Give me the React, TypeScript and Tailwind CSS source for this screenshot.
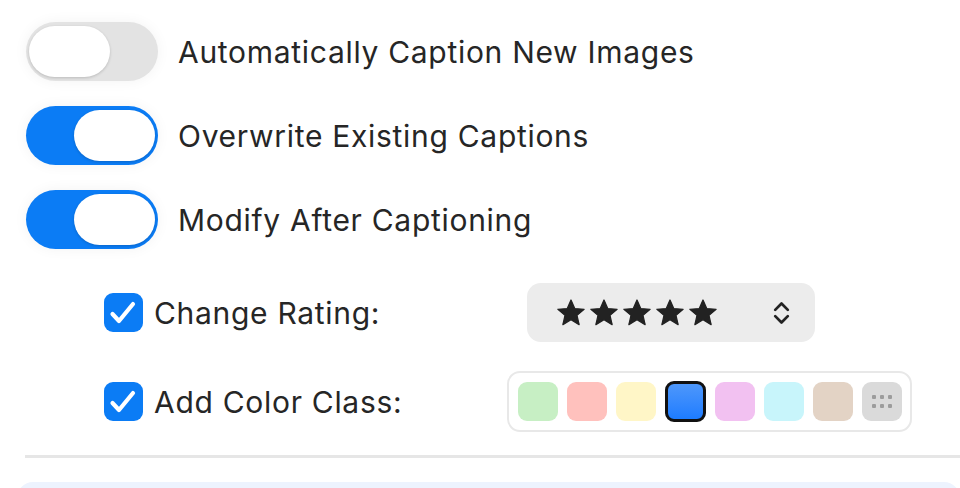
import React from "react";

const font = { fontFamily: 'Inter, "Noto Sans", "Liberation Sans", sans-serif' };

function Toggle({ on }: { on: boolean }) {
  return (
    <div
      className={`relative h-[59px] w-[132px] shrink-0 rounded-full shadow-[0_0_14px_rgba(0,0,0,0.05)] ${
        on ? "bg-[#0b7cf5]" : "bg-[#e3e3e3]"
      }`}
    >
      <div
        className={`absolute top-[4px] h-[51px] w-[81px] rounded-full bg-white shadow-[0_1px_3px_rgba(0,0,0,0.18)] ${
          on ? "right-[3px]" : "left-[3px]"
        }`}
      />
    </div>
  );
}

function Check() {
  return (
    <div className="flex h-[39px] w-[39px] shrink-0 items-center justify-center rounded-[9px] bg-[#0b7cf5]">
      <svg width="39" height="39" viewBox="0 0 39 39" fill="none">
        <path d="M8.5 21l6.5 7L29 11" stroke="white" strokeWidth="4.2" strokeLinecap="round" strokeLinejoin="round" />
      </svg>
    </div>
  );
}

function Star() {
  return (
    <svg width="30" height="29" viewBox="0 0 24 23" className="shrink-0">
      <polygon
        points="12,1.5 15,8.3 22.5,8.9 16.8,13.8 18.5,21.2 12,17.3 5.5,21.2 7.2,13.8 1.5,8.9 9,8.3"
        fill="#222"
        stroke="#222"
        strokeWidth="1"
        strokeLinejoin="round"
      />
    </svg>
  );
}

const swatches = ["#c7efc4", "#ffc1bd", "#fff6c7", "blue", "#f2c1f1", "#c8f5fb", "#e3d3c5", "more"];

const label = "text-[30px] leading-none tracking-[0.7px]";

export default function App() {
  return (
    <div className="h-[488px] w-[960px] overflow-hidden bg-white text-[#262626]" style={font}>
      <div className="flex flex-col pl-[26px] pt-[22px]">
        <div className="flex h-[59px] items-center gap-[20px]">
          <Toggle on={false} />
          <span className={label}>Automatically Caption New Images</span>
        </div>
        <div className="mt-[25px] flex h-[59px] items-center gap-[20px]">
          <Toggle on={true} />
          <span className={label}>Overwrite Existing Captions</span>
        </div>
        <div className="mt-[25px] flex h-[59px] items-center gap-[20px]">
          <Toggle on={true} />
          <span className={label}>Modify After Captioning</span>
        </div>
      </div>

      <div className="mt-[34px] flex flex-col pl-[104px]">
        <div className="flex h-[59px] items-center">
          <div className="flex w-[403px] items-center gap-[11px]">
            <Check />
            <span className={label}>Change Rating:</span>
          </div>
          <div className="ml-[20px] flex h-[59px] w-[288px] items-center rounded-[14px] bg-[#ececec] pl-[29px] pr-[23px]">
            <div className="flex items-center gap-[3px]">
              <Star />
              <Star />
              <Star />
              <Star />
              <Star />
            </div>
            <svg width="21" height="28" viewBox="0 0 20 26" className="ml-auto" fill="none">
              <path d="M4 10l6-6 6 6M4 16l6 6 6-6" stroke="#222" strokeWidth="2.6" strokeLinecap="round" strokeLinejoin="round" />
            </svg>
          </div>
        </div>

        <div className="mt-[29px] flex h-[61px] items-center">
          <div className="flex w-[403px] items-center gap-[11px]">
            <Check />
            <span className={label}>Add Color Class:</span>
          </div>
          <div className="flex h-[61px] w-[405px] items-center gap-[9px] rounded-[13px] border-2 border-[#e8e8e8] bg-white pl-[9px]">
            {swatches.map((c, i) =>
              c === "blue" ? (
                <div
                  key={i}
                  className="h-[41px] w-[41px] rounded-[9px] border-[3px] border-[#111] bg-gradient-to-b from-[#4d97fb] to-[#1c7cff]"
                />
              ) : c === "more" ? (
                <div key={i} className="grid h-[39px] w-[40px] place-items-center rounded-[9px] bg-[#dadada]">
                  <div className="grid grid-cols-3 gap-x-[4px] gap-y-[5px]">
                    {[0, 1, 2, 3, 4, 5].map((d) => (
                      <div key={d} className="h-[4px] w-[4px] rounded-[1px] bg-[#9c9c9c]" />
                    ))}
                  </div>
                </div>
              ) : (
                <div key={i} className="h-[39px] w-[40px] rounded-[9px]" style={{ backgroundColor: c }} />
              )
            )}
          </div>
        </div>
      </div>

      <div className="ml-[25px] mt-[23px] h-[3px] bg-[#e6e6e6]" />
      <div className="ml-[17px] mt-[24px] h-[40px] rounded-t-[16px] bg-[#edf3fe]" />
    </div>
  );
}
